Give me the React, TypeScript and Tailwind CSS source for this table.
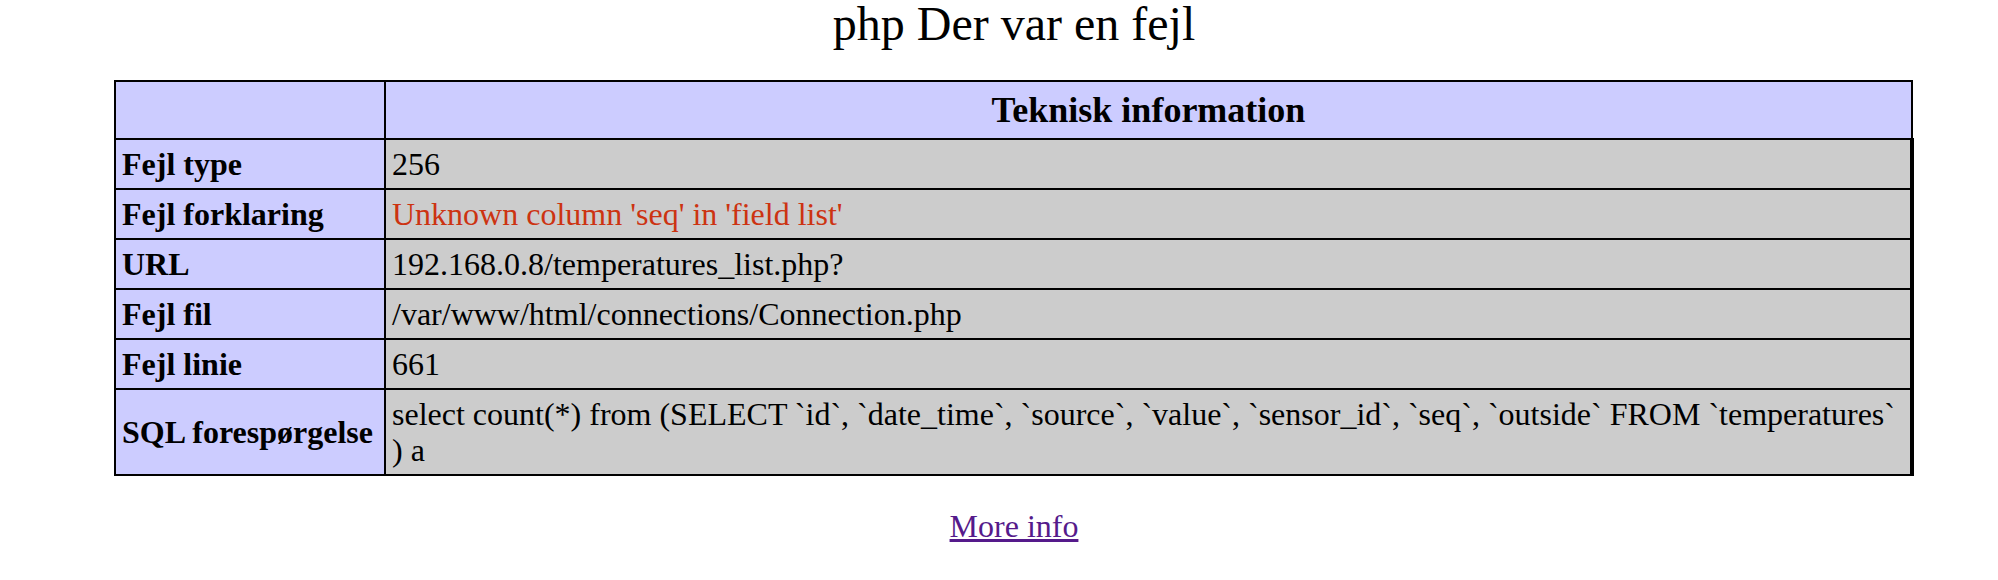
import React from 'react';

const rows: { label: string; value: string; error?: boolean }[] = [
  { label: 'Fejl type', value: '256' },
  { label: 'Fejl forklaring', value: "Unknown column 'seq' in 'field list'", error: true },
  { label: 'URL', value: '192.168.0.8/temperatures_list.php?' },
  { label: 'Fejl fil', value: '/var/www/html/connections/Connection.php' },
  { label: 'Fejl linie', value: '661' },
  {
    label: 'SQL forespørgelse',
    value:
      'select count(*) from (SELECT `id`, `date_time`, `source`, `value`, `sensor_id`, `seq`, `outside` FROM `temperatures` ) a',
  },
];

const App: React.FC = () => {
  return (
    <div className="min-h-screen bg-white pl-[30px] font-['Liberation_Serif','Times_New_Roman',serif] text-black">
      <h1 className="text-center text-[48px] leading-[48px] font-normal">php Der var en fejl</h1>

      <table className="mx-auto mt-[32px] w-[1800px] border-collapse border-2 border-black">
        <thead>
          <tr>
            <th className="w-[270px] border-2 border-black bg-[#ccccff] py-[6px]"></th>
            <th className="border-2 border-black bg-[#ccccff] py-[7px] text-center text-[36px] leading-[42px] font-bold">
              Teknisk information
            </th>
          </tr>
        </thead>
        <tbody>
          {rows.map((row, index) => (
            <tr key={index}>
              <td className="border-2 border-black bg-[#ccccff] px-[6px] py-[6px] text-left align-middle text-[32px] leading-[36px] font-bold whitespace-nowrap">
                {row.label}
              </td>
              <td
                className={`border-2 border-r-4 border-black bg-[#cccccc] px-[6px] py-[6px] text-left align-middle text-[32px] leading-[36px] ${
                  row.error ? 'text-[#cc3311]' : 'text-black'
                }`}
              >
                {row.value}
              </td>
            </tr>
          ))}
        </tbody>
      </table>

      <div className="mt-[26px] text-center text-[32px] leading-normal">
        <a href="#" className="text-[#551a8b] underline">
          More info
        </a>
      </div>
    </div>
  );
};

export default App;
